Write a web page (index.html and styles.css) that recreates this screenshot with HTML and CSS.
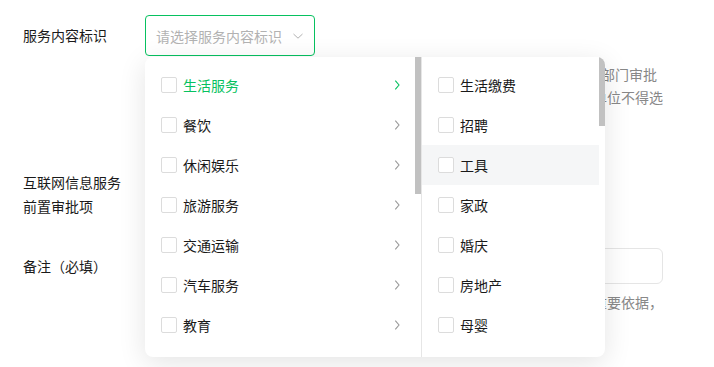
FILE: index.html
```html
<!DOCTYPE html>
<html lang="zh-CN">
<head>
<meta charset="utf-8">
<title>服务内容标识</title>
<link rel="stylesheet" href="styles.css">
</head>
<body>
<form class="form">
  <div class="row">
    <div class="label">服务内容标识</div>
    <div class="control">
      <div class="select-wrap">
        <div class="select is-open">
          <span class="placeholder">请选择服务内容标识</span>
          <svg class="arrow" width="12" height="12" viewBox="0 0 12 12"><path d="M1.5 4 L6 8.2 L10.5 4" fill="none" stroke="#b2b2b2" stroke-width="1"/></svg>
        </div>
        <div class="dropdown">
          <div class="col col-main">
            <ul class="list">
              <li class="opt active"><span class="cb"></span><span class="txt">生活服务</span><svg class="chev" width="12" height="12" viewBox="0 0 12 12"><path d="M4.3 1.6 L8 6 L4.3 10.4" fill="none" stroke="currentColor" stroke-width="1.1"/></svg></li>
              <li class="opt"><span class="cb"></span><span class="txt">餐饮</span><svg class="chev" width="12" height="12" viewBox="0 0 12 12"><path d="M4.3 1.6 L8 6 L4.3 10.4" fill="none" stroke="currentColor" stroke-width="1.1"/></svg></li>
              <li class="opt"><span class="cb"></span><span class="txt">休闲娱乐</span><svg class="chev" width="12" height="12" viewBox="0 0 12 12"><path d="M4.3 1.6 L8 6 L4.3 10.4" fill="none" stroke="currentColor" stroke-width="1.1"/></svg></li>
              <li class="opt"><span class="cb"></span><span class="txt">旅游服务</span><svg class="chev" width="12" height="12" viewBox="0 0 12 12"><path d="M4.3 1.6 L8 6 L4.3 10.4" fill="none" stroke="currentColor" stroke-width="1.1"/></svg></li>
              <li class="opt"><span class="cb"></span><span class="txt">交通运输</span><svg class="chev" width="12" height="12" viewBox="0 0 12 12"><path d="M4.3 1.6 L8 6 L4.3 10.4" fill="none" stroke="currentColor" stroke-width="1.1"/></svg></li>
              <li class="opt"><span class="cb"></span><span class="txt">汽车服务</span><svg class="chev" width="12" height="12" viewBox="0 0 12 12"><path d="M4.3 1.6 L8 6 L4.3 10.4" fill="none" stroke="currentColor" stroke-width="1.1"/></svg></li>
              <li class="opt"><span class="cb"></span><span class="txt">教育</span><svg class="chev" width="12" height="12" viewBox="0 0 12 12"><path d="M4.3 1.6 L8 6 L4.3 10.4" fill="none" stroke="currentColor" stroke-width="1.1"/></svg></li>
            </ul>
            <div class="scrollbar"><div class="thumb thumb-main"></div></div>
          </div>
          <div class="col col-sub">
            <ul class="list">
              <li class="opt"><span class="cb"></span><span class="txt">生活缴费</span></li>
              <li class="opt"><span class="cb"></span><span class="txt">招聘</span></li>
              <li class="opt hover"><span class="cb"></span><span class="txt">工具</span></li>
              <li class="opt"><span class="cb"></span><span class="txt">家政</span></li>
              <li class="opt"><span class="cb"></span><span class="txt">婚庆</span></li>
              <li class="opt"><span class="cb"></span><span class="txt">房地产</span></li>
              <li class="opt"><span class="cb"></span><span class="txt">母婴</span></li>
            </ul>
            <div class="scrollbar"><div class="thumb thumb-sub"></div></div>
          </div>
        </div>
      </div>
      <p class="help">根据实际经营内容准确选择服务内容标识，涉及ICP等特殊行业需取得相关部门审批后方可选择此类标识，并在备注中如实填写许可证编号，未取得许可证的单位不得选择。</p>
    </div>
  </div>

  <div class="row">
    <div class="label">互联网信息服务<br>前置审批项</div>
    <div class="control">
      <div class="select small"><span class="placeholder">请选择</span></div>
    </div>
  </div>

  <div class="row">
    <div class="label label-input">备注（必填）</div>
    <div class="control">
      <div class="input"></div>
      <p class="help">请填写与所选标识相关的资质说明及许可证信息，该信息将作为审核时的重要依据，请确保真实有效。</p>
    </div>
  </div>
</form>
</body>
</html>
```

FILE: styles.css
```css
* { box-sizing: border-box; }

html, body {
  margin: 0;
  background: #fff;
}

body {
  font-family: "Noto Sans CJK SC", "Noto Sans", sans-serif;
  font-size: 14px;
  color: #1a1a1a;
  overflow: hidden;
}

.form {
  padding: 15px 0 0 23px;
}

.row {
  display: flex;
  margin-bottom: 30px;
}

.label {
  width: 122px;
  flex: none;
  line-height: 24px;
  padding-top: 8px;
  color: #1a1a1a;
}

.label-input {
  padding-top: 6px;
}

.control {
  width: 519px;
  flex: none;
}

.select-wrap {
  position: relative;
  width: 170px;
}

.select {
  width: 170px;
  height: 41px;
  border: 1px solid #e0e0e0;
  border-radius: 4px;
  display: flex;
  align-items: center;
  justify-content: space-between;
  padding: 0 10px;
}

.select.is-open {
  border-color: #07c160;
}

.placeholder {
  color: #b2b2b2;
  line-height: 20px;
}

.arrow {
  display: block;
}

.help {
  margin: 7px 0 0;
  line-height: 23px;
  color: #888;
}

.input {
  height: 36px;
  width: 518px;
  border: 1px solid #e5e5e5;
  border-radius: 6px;
}

/* dropdown */
.dropdown {
  position: absolute;
  top: 42px;
  left: 0;
  z-index: 10;
  width: 460px;
  height: 300px;
  background: #fff;
  border-radius: 8px;
  box-shadow: 0 6px 28px rgba(0, 0, 0, 0.11);
  display: flex;
  overflow: hidden;
}

.col {
  display: flex;
  height: 300px;
  overflow: hidden;
  flex: none;
}

.col-main {
  width: 276px;
}

.col-sub {
  width: 184px;
  border-left: 1px solid #e6e6e6;
}

.list {
  list-style: none;
  margin: 0;
  padding: 8px 0;
  flex: 1;
  min-width: 0;
}

.scrollbar {
  width: 6px;
  flex: none;
}

.thumb {
  width: 6px;
  background: #c1c1c1;
}

.thumb-main {
  height: 137px;
}

.thumb-sub {
  height: 69px;
}

.opt {
  display: flex;
  align-items: center;
  height: 40px;
  padding: 0 12px 0 16px;
  color: #1a1a1a;
}

.opt.hover {
  background: #f5f6f7;
}

.cb {
  width: 16px;
  height: 16px;
  border: 1px solid #dcdcdc;
  border-radius: 2px;
  background: #fff;
  flex: none;
  margin-right: 6px;
}

.txt {
  flex: 1;
  line-height: 20px;
}

.chev {
  display: block;
  flex: none;
  color: #9a9a9a;
}

.opt.active .txt,
.opt.active .chev {
  color: #07c160;
}
```
